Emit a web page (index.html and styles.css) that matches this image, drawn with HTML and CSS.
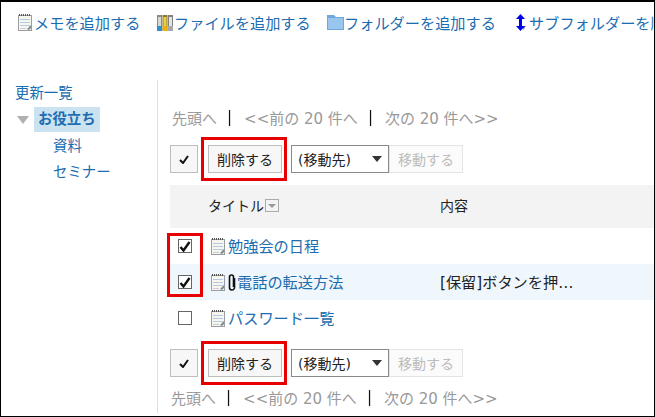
FILE: index.html
```html
<!DOCTYPE html>
<html lang="ja">
<head>
<meta charset="utf-8">
<title>メモ</title>
<link rel="stylesheet" href="styles.css">
</head>
<body>
<svg class="defs" width="0" height="0" aria-hidden="true">
  <symbol id="memo" viewBox="0 0 14 17">
    <rect x="0.5" y="1.5" width="13" height="15" fill="#f6f5ee" stroke="#9a9ea2"/>
    <path d="M1 1h12" stroke="#555" stroke-width="2" stroke-dasharray="1 1"/>
    <path d="M2 5.500h10M2 8.500h10M2 11.500h10" stroke="#b4cbe3"/>
    <path d="M2 14.500h6" stroke="#d6c8ce"/>
    <path d="M9 15l4-4v3l-2 2z" fill="#7d8a8f"/>
  </symbol>
</svg>
<div class="frame">
  <nav class="toolbar">
    <a class="tool tool-memo"><svg class="ic-memo"><use href="#memo"/></svg>メモを追加する</a>
    <a class="tool tool-file">
      <svg class="ic-file" viewBox="0 0 16 17">
        <path d="M0 1h5v16H0z" fill="#8a8a80"/><path d="M1 3h3v10H1z" fill="#d8d8d0"/><path d="M0 12h5v5H0z" fill="#2f8fd0"/>
        <path d="M5.500 1h5v16h-5z" fill="#8a7a30"/><path d="M6.500 3h3v10h-3z" fill="#f0d040"/><path d="M5.500 12h5v5h-5z" fill="#e8b010"/>
        <path d="M11 1h5v16h-5z" fill="#808080"/><path d="M12 3h3v10h-3z" fill="#e4e4e0"/><path d="M11 12h5v5h-5z" fill="#a8a8a8"/>
      </svg>ファイルを追加する</a>
    <a class="tool tool-folder">
      <svg class="ic-folder" viewBox="0 0 17 16">
        <path d="M0 1h7l2 2h8v13H0z" fill="#6fa8dc"/><path d="M1 4h15v11H1z" fill="#98c6ef"/>
      </svg>フォルダーを追加する</a>
    <a class="tool tool-sub">
      <svg class="ic-sub" viewBox="0 0 11 17">
        <path d="M6 12h4l-2.500 4z" fill="#8c8c8c"/>
        <path d="M4.500 0L9 5H6v7h3l-4.500 5L0 12h3V5H0z" fill="#0000f0"/>
      </svg>サブフォルダーを順番変更する</a>
  </nav>
  <div class="columns">
    <aside class="side">
      <a class="side-link">更新一覧</a>
      <div class="side-current"><span class="tri"></span><b class="current-label">お役立ち</b></div>
      <a class="side-child">資料</a>
      <a class="side-child">セミナー</a>
    </aside>
    <main class="main">
      <div class="pager pager-top"><span>先頭へ</span><i>|</i><span>&lt;&lt;前の 20 件へ</span><i>|</i><span>次の 20 件へ&gt;&gt;</span></div>
      <div class="actions">
        <button class="btn btn-check"><svg class="tick" viewBox="0 0 10 9"><path d="M1 5l3 3 5-7" fill="none" stroke="#111" stroke-width="2"/></svg></button>
        <button class="btn btn-del">削除する</button>
        <span class="select">(移動先)<span class="caret"></span></span>
        <button class="btn btn-move">移動する</button>
        <span class="mark mark-del"></span>
      </div>
      <div class="thead">
        <span class="col-title">タイトル<span class="sort"></span></span>
        <span class="col-body">内容</span>
      </div>
      <div class="rows">
        <span class="mark mark-checks"></span>
        <div class="row">
          <span class="cell-check"><span class="cb on"><svg class="cb-tick" viewBox="0 0 12 11"><path d="M1.500 6l3 3.500 6-8.500" fill="none" stroke="#111" stroke-width="2.400"/></svg></span></span>
          <svg class="ic-memo"><use href="#memo"/></svg><a class="row-link">勉強会の日程</a>
        </div>
        <div class="row row-hl">
          <span class="cell-check"><span class="cb on"><svg class="cb-tick" viewBox="0 0 12 11"><path d="M1.500 6l3 3.500 6-8.500" fill="none" stroke="#111" stroke-width="2.400"/></svg></span></span>
          <svg class="ic-memo"><use href="#memo"/></svg>
          <svg class="ic-clip" viewBox="0 0 8 17"><path d="M6.500 4v9.500a2.500 2.500 0 0 1-5 0V3a2 2 0 0 1 4 0v10" fill="none" stroke="#111" stroke-width="1.600"/></svg>
          <a class="row-link">電話の転送方法</a>
          <span class="row-body">[保留]ボタンを押…</span>
        </div>
        <div class="row">
          <span class="cell-check"><span class="cb"></span></span>
          <svg class="ic-memo"><use href="#memo"/></svg><a class="row-link">パスワード一覧</a>
        </div>
      </div>
      <div class="actions actions-bottom">
        <button class="btn btn-check"><svg class="tick" viewBox="0 0 10 9"><path d="M1 5l3 3 5-7" fill="none" stroke="#111" stroke-width="2"/></svg></button>
        <button class="btn btn-del">削除する</button>
        <span class="select">(移動先)<span class="caret"></span></span>
        <button class="btn btn-move">移動する</button>
        <span class="mark mark-del"></span>
      </div>
      <div class="pager pager-bottom"><span>先頭へ</span><i>|</i><span>&lt;&lt;前の 20 件へ</span><i>|</i><span>次の 20 件へ&gt;&gt;</span></div>
    </main>
  </div>
</div>
</body>
</html>
```

FILE: styles.css
```css
* { box-sizing: border-box; }
html, body { margin: 0; padding: 0; background: #fff; }
body {
  width: 655px;
  height: 417px;
  overflow: hidden;
  font-family: "DejaVu Sans", "Noto Sans CJK JP", sans-serif;
  font-size: 14px;
  color: #222;
}
.defs { position: absolute; }
.frame {
  width: 655px;
  height: 417px;
  border: 1px solid #000;
  border-top-width: 2px;
  overflow: hidden;
}
a { color: #1b6cb0; }

.toolbar {
  display: flex;
  align-items: center;
  height: 40px;
  padding-left: 17px;
  white-space: nowrap;
  font-size: 15.2px;
}
.tool { display: flex; align-items: center; flex: none; }
.tool-memo { width: 139px; }
.tool-file { width: 170px; }
.tool-folder { width: 189px; }
.ic-memo { width: 14px; height: 17px; flex: none; }
.tool .ic-memo { margin-right: 2px; }
.ic-file { width: 16px; height: 17px; margin-right: 1px; flex: none; }
.ic-folder { width: 17px; height: 16px; margin-right: 0; flex: none; }
.ic-sub { width: 11px; height: 17px; margin-right: 2px; flex: none; }

.columns { display: flex; margin-top: 38px; height: 333px; }
.side {
  width: 157px;
  flex: none;
  border-right: 1px solid #e0e0e0;
  padding-left: 14px;
  font-size: 14.4px;
}
.side-link { display: block; height: 26px; line-height: 26px; }
.side-current { display: flex; align-items: flex-end; height: 26px; }
.tri {
  width: 0;
  height: 0;
  margin: 0 5px 8px 2px;
  border-left: 6px solid transparent;
  border-right: 6px solid transparent;
  border-top: 8px solid #b0b0b0;
}
.current-label {
  background: #cbe2f1;
  color: #1b6cb0;
  padding: 0 4px;
  height: 25px;
  line-height: 24px;
}
.side-child { display: block; height: 26px; line-height: 26px; padding-left: 38px; }
.side-current + .side-child { margin-top: 1px; }

.main { flex: 1; min-width: 0; padding-left: 12px; position: relative; }
.pager { display: flex; align-items: center; color: #999; font-size: 15px; white-space: nowrap; }
.pager i { font-style: normal; color: #111; margin: 0 12px 0 10px; will-change: transform; }
.pager-top { padding-left: 2px; margin-top: 24px; height: 26px; }
.pager-bottom { padding-left: 1px; margin-top: 8px; height: 24px; }

.actions { display: flex; align-items: stretch; height: 28px; margin-top: 15px; position: relative; }
.actions-bottom { margin-top: 13px; }
.btn {
  font: inherit;
  padding: 0;
  margin: 0;
  background: #f7f7f7;
  border: 1px solid #bdbdbd;
  color: #222;
}
.btn-check { width: 28px; display: flex; align-items: center; justify-content: center; }
.tick { width: 10px; height: 9px; }
.btn-del { width: 74px; margin-left: 10px; }
.select {
  width: 98px;
  margin-left: 9px;
  border: 1px solid #8a8a8a;
  display: flex;
  align-items: center;
  justify-content: space-between;
  padding: 0 6px 0 6px;
  background: #fff;
}
.caret {
  width: 0;
  height: 0;
  border-left: 5px solid transparent;
  border-right: 5px solid transparent;
  border-top: 6px solid #333;
}
.btn-move { width: 74px; color: #bbb; background: #fbfbfb; border-color: #e4e4e4; margin-left: 0; }

.mark { position: absolute; border: 3px solid #e60000; pointer-events: none; }
.actions .mark-del { left: 31px; top: -8px; width: 86px; height: 44px; }
.mark-checks { left: -3px; top: 5px; width: 36px; height: 64px; }

.thead {
  display: flex;
  align-items: center;
  height: 43px;
  margin-top: 12px;
  padding-bottom: 4px;
  background: #f3f3f3;
  position: relative;
}
.col-title { display: flex; align-items: center; width: 270px; padding-left: 38px; }
.sort {
  width: 14px;
  height: 13px;
  margin-left: 1px;
  margin-top: 1px;
  border: 1px solid #aaa;
  background: #f4f4f4;
  position: relative;
}
.sort::after {
  content: "";
  position: absolute;
  left: 2px;
  top: 4px;
  border-left: 4px solid transparent;
  border-right: 4px solid transparent;
  border-top: 4px solid #999;
}

.rows { position: relative; }
.row { display: flex; align-items: center; height: 36px; font-size: 15.2px; white-space: nowrap; }
.row-hl { background: #eff6fc; }
.cell-check { width: 30px; margin-right: 11px; display: flex; justify-content: center; flex: none; }
.cb {
  width: 14px;
  height: 14px;
  border: 1px solid #666;
  background: #fff;
  display: flex;
  align-items: center;
  justify-content: center;
}
.cb-tick { width: 12px; height: 11px; flex: none; }
.row .ic-memo { margin-right: 3px; }
.ic-clip { width: 8px; height: 17px; margin-right: 1px; flex: none; }
.row-link { flex: none; margin-bottom: 2px; }
.row-hl .row-link { width: 203px; }
.row-body { color: #222; margin-bottom: 2px; }
```
